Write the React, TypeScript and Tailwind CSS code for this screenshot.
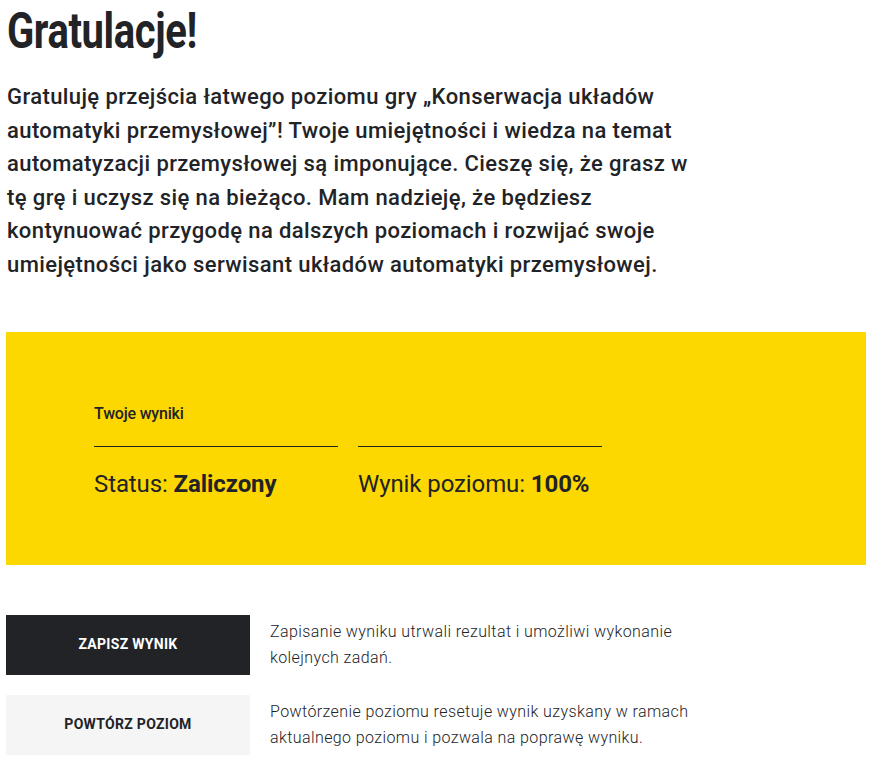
const body = "font-['Roboto',sans-serif]";

function ResultCell({ label, value }: { label: string; value: string }) {
  return (
    <div className="flex flex-col">
      <div className="border-b border-[#222327]" />
      <p className="mt-[22px] text-[24px] leading-[30px] tracking-[-0.1px] text-[#222327]">
        {label} <b className="font-bold">{value}</b>
      </p>
    </div>
  );
}

function ActionRow({
  label,
  dark,
  children,
}: {
  label: string;
  dark?: boolean;
  children: React.ReactNode;
}) {
  return (
    <div className="flex items-start gap-5">
      <button
        className={
          dark
            ? "h-[60px] w-[244px] shrink-0 bg-[#222327] text-[14px] font-bold uppercase tracking-[0.3px] text-white"
            : "h-[60px] w-[244px] shrink-0 bg-[#f5f5f5] text-[14px] font-bold uppercase tracking-[0.3px] text-[#222327]"
        }
      >
        {label}
      </button>
      <p className="mt-[4px] max-w-[440px] text-[16px] font-light leading-[26px] tracking-[0.4px] text-[#222327]">
        {children}
      </p>
    </div>
  );
}

export default function App() {
  return (
    <main className={`${body} min-h-screen bg-white pl-[6px] pr-[13px] pt-[1px]`}>
      <h1 className="h-[60px] pl-[1px] text-[#222327]">
        <span className="inline-block origin-left scale-x-[0.8] text-[50px] font-bold leading-[60px] tracking-[-0.5px]">
          Gratulacje!
        </span>
      </h1>

      <p className="mt-[19px] max-w-[695px] pl-[1px] text-[22px] font-medium leading-[33.6px] tracking-[0.4px] text-[#222327]">
        Gratuluję przejścia łatwego poziomu gry „Konserwacja układów automatyki
        przemysłowej”! Twoje umiejętności i wiedza na temat automatyzacji
        przemysłowej są imponujące. Cieszę się, że grasz w tę grę i uczysz się
        na bieżąco. Mam nadzieję, że będziesz kontynuować przygodę na dalszych
        poziomach i rozwijać swoje umiejętności jako serwisant układów
        automatyki przemysłowej.
      </p>

      <section className="mt-[50px] h-[233px] bg-[#fdd700] px-[88px] pt-[72px]">
        <h2 className="text-[16px] font-medium leading-[20px] tracking-[-0.2px] text-[#222327]">
          Twoje wyniki
        </h2>
        <div className="mt-[22px] grid w-[508px] grid-cols-2 gap-5">
          <ResultCell label="Status:" value="Zaliczony" />
          <ResultCell label="Wynik poziomu:" value="100%" />
        </div>
      </section>

      <div className="mt-[50px] flex flex-col gap-5 pb-4">
        <ActionRow label="Zapisz wynik" dark>
          Zapisanie wyniku utrwali rezultat i umożliwi wykonanie kolejnych zadań.
        </ActionRow>
        <ActionRow label="Powtórz poziom">
          Powtórzenie poziomu resetuje wynik uzyskany w ramach aktualnego poziomu
          i pozwala na poprawę wyniku.
        </ActionRow>
      </div>
    </main>
  );
}
